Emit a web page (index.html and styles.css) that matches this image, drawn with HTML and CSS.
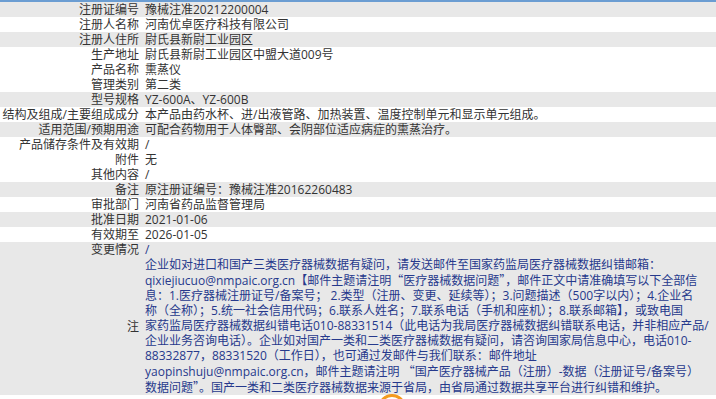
FILE: index.html
```html
<!DOCTYPE html>
<html lang="zh-CN">
<head>
<meta charset="utf-8">
<title>医疗器械注册信息</title>
<link rel="stylesheet" href="styles.css">
</head>
<body>
<div class="page">
  <table class="info">
    <tr class="alt"><td class="k">注册证编号</td><td class="v">豫械注准20212200004</td></tr>
    <tr><td class="k">注册人名称</td><td class="v">河南优卓医疗科技有限公司</td></tr>
    <tr class="alt"><td class="k">注册人住所</td><td class="v">尉氏县新尉工业园区</td></tr>
    <tr><td class="k">生产地址</td><td class="v">尉氏县新尉工业园区中盟大道009号</td></tr>
    <tr><td class="k">产品名称</td><td class="v">熏蒸仪</td></tr>
    <tr><td class="k">管理类别</td><td class="v">第二类</td></tr>
    <tr class="alt"><td class="k">型号规格</td><td class="v">YZ-600A、YZ-600B</td></tr>
    <tr><td class="k">结构及组成/主要组成成分</td><td class="v">本产品由药水杯、进/出液管路、加热装置、温度控制单元和显示单元组成。</td></tr>
    <tr class="alt"><td class="k">适用范围/预期用途</td><td class="v">可配合药物用于人体臀部、会阴部位适应病症的熏蒸治疗。</td></tr>
    <tr><td class="k">产品储存条件及有效期</td><td class="v">/</td></tr>
    <tr><td class="k">附件</td><td class="v">无</td></tr>
    <tr><td class="k">其他内容</td><td class="v">/</td></tr>
    <tr class="alt"><td class="k">备注</td><td class="v">原注册证编号：豫械注准20162260483</td></tr>
    <tr><td class="k">审批部门</td><td class="v">河南省药品监督管理局</td></tr>
    <tr class="alt"><td class="k">批准日期</td><td class="v">2021-01-06</td></tr>
    <tr><td class="k">有效期至</td><td class="v">2026-01-05</td></tr>
    <tr class="alt"><td class="k">变更情况</td><td class="v note-c">/</td></tr>
    <tr class="alt"><td class="k">注</td><td class="v note">企业如对进口和国产三类医疗器械数据有疑问，请发送邮件至国家药监局医疗器械数据纠错邮箱：<br>qixiejiucuo@nmpaic.org.cn【邮件主题请注明<span class="q">“</span>医疗器械数据问题<span class="q">”</span>，邮件正文中请准确填写以下全部信<br>息：1.医疗器械注册证号/备案号； 2.类型（注册、变更、延续等）；3.问题描述（500字以内）；4.企业名<br>称（全称）；5.统一社会信用代码；6.联系人姓名；7.联系电话（手机和座机）；8.联系邮箱】，或致电国<br>家药监局医疗器械数据纠错电话010-88331514（此电话为我局医疗器械数据纠错联系电话，并非相应产品/<br>企业业务咨询电话）。企业如对国产一类和二类医疗器械数据有疑问，请咨询国家局信息中心，电话010-<br>88332877，88331520（工作日），也可通过发邮件与我们联系：邮件地址<br>yaopinshuju@nmpaic.org.cn，邮件主题请注明 <span class="q">“</span>国产医疗器械产品（注册）-数据（注册证号/备案号）<br>数据问题<span class="q">”</span>。国产一类和二类医疗器械数据来源于省局，由省局通过数据共享平台进行纠错和维护。</td></tr>
  </table>
  <div class="fab" aria-hidden="true"></div>
</div>
</body>
</html>
```

FILE: styles.css
```css
html, body {
  margin: 0;
  padding: 0;
  background: #fff;
}
body {
  font-family: "Open Sans", "Noto Sans CJK SC", sans-serif;
  font-size: 12px;
  color: #333;
  overflow: hidden;
}
.page {
  position: relative;
  width: 716px;
  height: 399px;
  border-top: 2px solid #6b9dd2;
  box-sizing: border-box;
  overflow: hidden;
}
.info {
  width: 100%;
  border-collapse: collapse;
  border-spacing: 0;
}
.info td {
  padding: 0;
  line-height: 15px;
  height: 15px;
}
.info tr.alt td {
  background: #e8e8e8;
}
.k {
  width: 139px;
  text-align: right;
  white-space: nowrap;
  vertical-align: middle;
}
.v {
  padding-left: 6px !important;
  white-space: nowrap;
  overflow: hidden;
}
.note, .note-c {
  color: #26398c;
}
.q {
  font-family: "Noto Sans CJK SC", sans-serif;
}
.fab {
  position: absolute;
  left: 378px;
  top: 392px;
  width: 22px;
  height: 22px;
  border-radius: 50%;
  border: 3px solid #f39a1e;
  background: #fff;
}
```
